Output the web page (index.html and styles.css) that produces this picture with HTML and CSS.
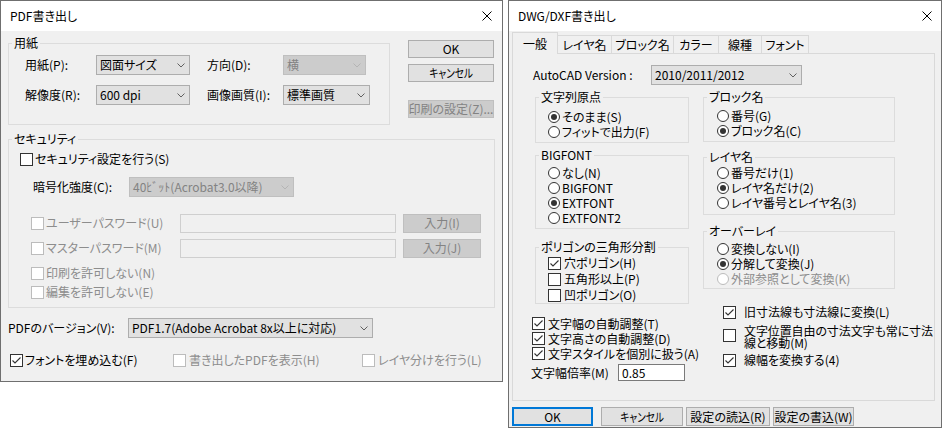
FILE: index.html
```html
<!DOCTYPE html>
<html lang="ja">
<head>
<meta charset="utf-8">
<title>書き出しダイアログ</title>
<link rel="stylesheet" href="styles.css">
</head>
<body>
<div class="desktop">

  <section class="win win-pdf">
    <header class="titlebar">
      <span>PDF書き出し</span>
      <svg class="close" viewBox="0 0 10 10"><path d="M0.5 0.5L9.5 9.5M9.5 0.5L0.5 9.5"/></svg>
    </header>
    <div class="pdf-body">
      <div class="top-row">
        <div class="group g-paper">
          <div class="gtitle">用紙</div>
          <div class="paper-grid">
            <span>用紙(P):</span>
            <div class="select w94"><span class="val">図面サイズ</span><svg class="chev" viewBox="0 0 8 5"><path d="M0.5 0.5L4 4L7.5 0.5"/></svg></div>
            <span>方向(D):</span>
            <div class="select dis w83"><span class="val">横</span><svg class="chev" viewBox="0 0 8 5"><path d="M0.5 0.5L4 4L7.5 0.5"/></svg></div>
            <span>解像度(R):</span>
            <div class="select w94"><span class="val">600 dpi</span><svg class="chev" viewBox="0 0 8 5"><path d="M0.5 0.5L4 4L7.5 0.5"/></svg></div>
            <span>画像画質(I):</span>
            <div class="select w87"><span class="val">標準画質</span><svg class="chev" viewBox="0 0 8 5"><path d="M0.5 0.5L4 4L7.5 0.5"/></svg></div>
          </div>
        </div>
        <div class="btn-col">
          <button class="btn">OK</button>
          <button class="btn"><span class="narrow">キャンセル</span></button>
          <button class="btn dis btn-print">印刷の設定(Z)...</button>
        </div>
      </div>

      <div class="group g-sec">
        <div class="gtitle">セキュリティ</div>
        <div class="row r-s1"><span class="cb"></span><span>セキュリティ設定を行う(S)</span></div>
        <div class="row r-s2"><span class="lbl-enc">暗号化強度(C):</span><div class="select dis w165"><span class="val">40ﾋﾞｯﾄ(Acrobat3.0以降)</span><svg class="chev" viewBox="0 0 8 5"><path d="M0.5 0.5L4 4L7.5 0.5"/></svg></div></div>
        <div class="row r-pw first"><span class="opt pw-lbl dis-t"><span class="cb dis"></span>ユーザーパスワード(U)</span><div class="input dis"></div><button class="btn dis pw-btn">入力(I)</button></div>
        <div class="row r-pw"><span class="opt pw-lbl dis-t"><span class="cb dis"></span>マスターパスワード(M)</span><div class="input dis"></div><button class="btn dis pw-btn">入力(J)</button></div>
        <div class="row r-perm first"><span class="opt dis-t"><span class="cb dis"></span>印刷を許可しない(N)</span></div>
        <div class="row r-perm"><span class="opt dis-t"><span class="cb dis"></span>編集を許可しない(E)</span></div>
      </div>

      <div class="row ver-row">
        <span class="lbl-ver">PDFのバージョン(V):</span>
        <div class="select w245"><span class="val">PDF1.7(Adobe Acrobat 8x以上に対応)</span><svg class="chev" viewBox="0 0 8 5"><path d="M0.5 0.5L4 4L7.5 0.5"/></svg></div>
      </div>

      <div class="opts-row">
        <span class="opt g1"><span class="cb"><svg viewBox="0 0 11 11"><path d="M1.5 5.5L4 8L9.5 2.5"/></svg></span>フォントを埋め込む(F)</span>
        <span class="opt g3 dis-t"><span class="cb dis"></span>書き出したPDFを表示(H)</span>
        <span class="opt g3 dis-t"><span class="cb dis"></span>レイヤ分けを行う(L)</span>
      </div>
    </div>
  </section>

  <section class="win win-dwg">
    <header class="titlebar">
      <span>DWG/DXF書き出し</span>
      <svg class="close" viewBox="0 0 10 10"><path d="M0.5 0.5L9.5 9.5M9.5 0.5L0.5 9.5"/></svg>
    </header>
    <nav class="tabs">
      <div class="tab active t1">一般</div>
      <div class="tab t2">レイヤ名</div>
      <div class="tab t3">ブロック名</div>
      <div class="tab t4">カラー</div>
      <div class="tab t5">線種</div>
      <div class="tab t6">フォント</div>
    </nav>
    <div class="panel">
      <div class="row ver2">
        <span class="lbl-acad">AutoCAD Version :</span>
        <div class="select w151"><span class="val">2010/2011/2012</span><svg class="chev" viewBox="0 0 8 5"><path d="M0.5 0.5L4 4L7.5 0.5"/></svg></div>
      </div>
      <div class="cols">
        <div class="col-l">
          <div class="group gl1">
            <div class="gtitle">文字列原点</div>
            <div class="list m5">
              <span class="opt"><span class="rb on"></span>そのまま(S)</span>
              <span class="opt"><span class="rb"></span>フィットで出力(F)</span>
            </div>
          </div>
          <div class="group gl2">
            <div class="gtitle">BIGFONT</div>
            <div class="list m3">
              <span class="opt"><span class="rb"></span>なし(N)</span>
              <span class="opt"><span class="rb"></span>BIGFONT</span>
              <span class="opt"><span class="rb on"></span>EXTFONT</span>
              <span class="opt"><span class="rb"></span>EXTFONT2</span>
            </div>
          </div>
          <div class="group gl3">
            <div class="gtitle">ポリゴンの三角形分割</div>
            <div class="list m1 tall">
              <span class="opt"><span class="cb"><svg viewBox="0 0 11 11"><path d="M1.5 5.5L4 8L9.5 2.5"/></svg></span>穴ポリゴン(H)</span>
              <span class="opt"><span class="cb"></span>五角形以上(P)</span>
              <span class="opt"><span class="cb"></span>凹ポリゴン(O)</span>
            </div>
          </div>
          <div class="lchk">
            <span class="opt"><span class="cb"><svg viewBox="0 0 11 11"><path d="M1.5 5.5L4 8L9.5 2.5"/></svg></span>文字幅の自動調整(T)</span>
            <span class="opt"><span class="cb"><svg viewBox="0 0 11 11"><path d="M1.5 5.5L4 8L9.5 2.5"/></svg></span>文字高さの自動調整(D)</span>
            <span class="opt"><span class="cb"><svg viewBox="0 0 11 11"><path d="M1.5 5.5L4 8L9.5 2.5"/></svg></span>文字スタイルを個別に扱う(A)</span>
          </div>
          <div class="row ratio">
            <span class="lbl-ratio">文字幅倍率(M)</span>
            <div class="input w67">0.85</div>
          </div>
        </div>
        <div class="col-r">
          <div class="group gr1">
            <div class="gtitle">ブロック名</div>
            <div class="list m4">
              <span class="opt"><span class="rb"></span>番号(G)</span>
              <span class="opt"><span class="rb on"></span>ブロック名(C)</span>
            </div>
          </div>
          <div class="group gr2">
            <div class="gtitle">レイヤ名</div>
            <div class="list m1">
              <span class="opt"><span class="rb"></span>番号だけ(1)</span>
              <span class="opt"><span class="rb on"></span>レイヤ名だけ(2)</span>
              <span class="opt"><span class="rb"></span>レイヤ番号とレイヤ名(3)</span>
            </div>
          </div>
          <div class="group gr3">
            <div class="gtitle">オーバーレイ</div>
            <div class="list m3">
              <span class="opt"><span class="rb"></span>変換しない(I)</span>
              <span class="opt"><span class="rb on"></span>分解して変換(J)</span>
              <span class="opt dis-t"><span class="rb dis"></span>外部参照として変換(K)</span>
            </div>
          </div>
          <span class="opt rchk c1"><span class="cb"><svg viewBox="0 0 11 11"><path d="M1.5 5.5L4 8L9.5 2.5"/></svg></span>旧寸法線も寸法線に変換(L)</span>
          <span class="opt rchk c2"><span class="cb"></span><span class="two">文字位置自由の寸法文字も常に寸法<br>線と移動(M)</span></span>
          <span class="opt rchk c3"><span class="cb"><svg viewBox="0 0 11 11"><path d="M1.5 5.5L4 8L9.5 2.5"/></svg></span>線幅を変換する(4)</span>
        </div>
      </div>
    </div>
    <div class="btm">
      <button class="btn b-ok">OK</button>
      <button class="btn b-cancel"><span class="narrow">キャンセル</span></button>
      <button class="btn b-load">設定の読込(R)</button>
      <button class="btn b-save">設定の書込(W)</button>
    </div>
  </section>

</div>
</body>
</html>
```

FILE: styles.css
```css
body {
  margin: 0;
  background: #ffffff;
  font-family: "Noto Sans CJK JP", "Noto Sans", sans-serif;
  font-size: 12px;
  line-height: 14px;
  font-feature-settings: "palt";
  color: #000000;
}

.desktop {
  position: relative;
  width: 942px;
  height: 428px;
  overflow: hidden;
}

.win {
  position: absolute;
  top: 0;
  box-sizing: border-box;
  border: 1px solid #6f6f6f;
  background: #f0f0f0;
}

.win-pdf { left: 0; width: 503px; height: 382px; }
.win-dwg { left: 508px; width: 434px; height: 428px; }

.titlebar {
  display: flex;
  align-items: center;
  height: 30px;
  padding-left: 9px;
  background: #ffffff;
}

.close {
  width: 10px;
  height: 10px;
  margin-left: auto;
  fill: none;
  stroke: #000000;
  stroke-width: 1;
}
.win-pdf .close { margin-right: 10px; }
.win-dwg .close { margin-right: 9px; }

/* common controls */
.row { display: flex; align-items: center; white-space: nowrap; }

.group {
  box-sizing: border-box;
  border: 1px solid #dcdcdc;
}

.gtitle {
  width: max-content;
  height: 14px;
  margin: -8px 0 0 3px;
  padding: 0 2px;
  background: #f0f0f0;
  line-height: 14px;
}

.select {
  box-sizing: border-box;
  height: 20px;
  display: flex;
  align-items: center;
  border: 1px solid #adadad;
  background: #e1e1e1;
  padding: 0 4px 0 3px;
  white-space: nowrap;
}
.select .val { flex: 1; min-width: 0; }
.chev {
  flex: none;
  width: 8px;
  height: 5px;
  fill: none;
  stroke: #606060;
  stroke-width: 1;
}
.select.dis { background: #cccccc; border-color: #bfbfbf; color: #838383; }
.select.dis .chev { stroke: #b4b4b4; }

.w94 { width: 94px; }
.w83 { width: 83px; }
.w87 { width: 87px; }
.w165 { width: 165px; }
.w245 { width: 245px; }
.w151 { width: 151px; height: 20px; }

.btn {
  box-sizing: border-box;
  height: 18px;
  border: 1px solid #adadad;
  background: #e1e1e1;
  font: inherit;
  color: #000000;
  padding: 0;
  display: flex;
  align-items: center;
  justify-content: center;
  white-space: nowrap;
}
.btn.dis { background: #cccccc; border-color: #bfbfbf; color: #838383; }
.narrow { display: inline-block; transform: scaleX(0.8); }

.input {
  box-sizing: border-box;
  height: 19px;
  width: 216px;
  border: 1px solid #7a7a7a;
  background: #ffffff;
  padding-left: 3px;
  display: flex;
  align-items: center;
}
.input.dis { border-color: #cfcfcf; background: #f0f0f0; }

.opt { display: flex; align-items: center; gap: 2px; white-space: nowrap; }
.dis-t { color: #8d8d8d; }

.cb {
  box-sizing: border-box;
  flex: none;
  width: 13px;
  height: 13px;
  border: 1px solid #333333;
  background: #ffffff;
  display: flex;
  align-items: center;
  justify-content: center;
}
.cb svg { width: 11px; height: 11px; fill: none; stroke: #333333; stroke-width: 1.1; }
.cb.dis { border-color: #bcbcbc; }

.rb {
  box-sizing: border-box;
  flex: none;
  width: 12px;
  height: 12px;
  border: 1px solid #333333;
  border-radius: 50%;
  background: #ffffff;
  display: flex;
  align-items: center;
  justify-content: center;
}
.rb.on::after {
  content: "";
  width: 6px;
  height: 6px;
  border-radius: 50%;
  background: #333333;
}
.rb.dis { border-color: #bcbcbc; }

/* PDF dialog */
.pdf-body { padding: 9px 0 0 7px; }

.top-row { display: flex; align-items: flex-start; }

.g-paper { margin-top: 3px; width: 382px; height: 82px; }

.paper-grid {
  display: grid;
  grid-template-columns: 71px 111px 76px auto;
  grid-auto-rows: 20px;
  row-gap: 10px;
  align-items: center;
  margin: 5px 0 0 16px;
}

.btn-col {
  display: flex;
  flex-direction: column;
  gap: 6px;
  width: 86px;
  margin-left: 18px;
}
.btn-print { margin-top: 12px; }

.g-sec { margin-top: 14px; width: 487px; height: 169px; }
.r-s1 { height: 26px; padding-left: 11px; gap: 2px; }
.r-s2 { height: 30px; padding-left: 24px; }
.lbl-enc { width: 96px; }
.r-pw { height: 22px; padding-left: 22px; margin-top: 3px; }
.r-pw.first { margin-top: 10px; }
.pw-lbl { width: 149px; }
.pw-btn { width: 78px; height: 19px; margin-left: 7px; }
.r-perm { height: 18px; padding-left: 22px; }
.r-perm.first { height: 20px; margin-top: 4px; }

.ver-row { margin-top: 10px; height: 20px; }
.lbl-ver { width: 120px; }

.opts-row {
  display: grid;
  grid-template-columns: 163px 189px auto;
  align-items: center;
  height: 20px;
  margin: 12px 0 0 2px;
}
.opts-row .g3 { gap: 3px; }

/* DWG dialog */
.tabs {
  display: flex;
  align-items: flex-end;
  height: 22px;
  padding-left: 3px;
}
.tab {
  box-sizing: border-box;
  height: 18px;
  margin-left: -1px;
  border: 1px solid #d9d9d9;
  border-bottom: none;
  background: #f0f0f0;
  display: flex;
  align-items: center;
  justify-content: center;
  white-space: nowrap;
}
.tab.t1 { margin-left: 0; }
.tab.active { height: 22px; margin-bottom: -1px; position: relative; z-index: 1; }
.t1 { width: 46px; }
.t2 { width: 55px; }
.t3 { width: 63px; }
.t4 { width: 46px; }
.t5 { width: 44px; }
.t6 { width: 48px; }

.panel {
  box-sizing: border-box;
  width: 423px;
  height: 348px;
  margin-left: 3px;
  border: 1px solid #d9d9d9;
}

.ver2 { margin-top: 11px; height: 20px; padding-left: 20px; }
.lbl-acad { width: 118px; }

.cols { display: flex; align-items: flex-start; margin-top: 12px; padding-left: 18px; }
.col-l { width: 158px; }
.col-r { width: 200px; margin-left: 14px; display: flex; flex-direction: column; }
.col-l > .group { margin-left: 4px; width: 154px; }
.col-r > .group { width: 192px; }

.list { display: flex; flex-direction: column; padding-left: 12px; }
.list .opt { height: 15px; }
.list.tall .opt { height: 16px; gap: 3px; }
.col-r .list { padding-left: 13px; }
.m1 { margin-top: 1px; }
.m3 { margin-top: 3px; }
.m4 { margin-top: 4px; }
.m5 { margin-top: 5px; }

.gl1 { height: 46px; }
.gl2 { height: 74px; margin-top: 12px; }
.gl3 { height: 57px; margin-top: 18px; }

.lchk { display: flex; flex-direction: column; margin: 12px 0 0 1px; }
.lchk .opt { height: 15px; gap: 3px; }

.ratio { margin-top: 3px; height: 17px; }
.lbl-ratio { width: 87px; }
.w67 { width: 67px; height: 17px; }

.gr1 { height: 45px; }
.gr2 { height: 58px; margin-top: 15px; }
.gr3 { height: 58px; margin-top: 16px; }

.rchk { padding-left: 20px; gap: 8px; }
.rchk.c1 { height: 14px; margin-top: 16px; }
.rchk.c2 { align-items: flex-start; margin-top: 6px; }
.rchk.c2 .cb { margin-top: 4px; }
.two { line-height: 12px; letter-spacing: -0.1px; }
.rchk.c3 { height: 14px; margin-top: 4px; }

.btm { display: flex; margin-top: 6px; padding-left: 3px; }
.btm .btn { height: 19px; }
.b-ok { width: 81px; border: 2px solid #0078d7; }
.b-cancel { width: 82px; margin-left: 8px; }
.b-load { width: 84px; margin-left: 3px; }
.b-save { width: 81px; margin-left: 3px; }
```
